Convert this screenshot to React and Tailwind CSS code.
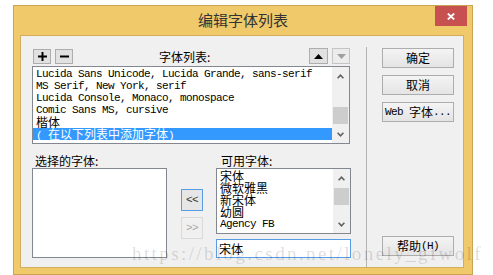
import React from 'react'

const mono = "font-['Liberation_Mono','Noto_Sans_CJK_SC',monospace] text-[11px] tracking-[-0.6px]"
const cjk = "font-['Noto_Sans_CJK_SC',sans-serif] text-[12px] tracking-normal"

function Chevron({ down }) {
  return (
    <svg width="7" height="5" viewBox="0 0 7 5">
      <path d={down ? 'M0.6 0.8 L3.5 3.8 L6.4 0.8' : 'M0.6 4.2 L3.5 1.2 L6.4 4.2'}
        fill="none" stroke="#606060" strokeWidth="1.6" />
    </svg>
  )
}

function ScrollBar({ thumb }) {
  return (
    <div className="w-[17px] bg-[#f0f0f0] flex flex-col">
      <div className="h-[17px] flex items-center justify-center pt-[2px]"><Chevron /></div>
      <div className="flex-1">
        <div className={'mx-px h-[17px] bg-[#cdcdcd] ' + thumb} />
      </div>
      <div className="h-[17px] flex items-center justify-center"><Chevron down /></div>
    </div>
  )
}

function Btn({ children, className = '' }) {
  return (
    <div className={'h-[20px] border border-[#adadad] bg-linear-to-b from-[#f4f4f4] to-[#e4e4e4] flex items-center justify-center text-black ' + className}>
      {children}
    </div>
  )
}

const fontSets = [
  'Lucida Sans Unicode, Lucida Grande, sans-serif',
  'MS Serif, New York, serif',
  'Lucida Console, Monaco, monospace',
  'Comic Sans MS, cursive',
]

const available = ['宋体', '微软雅黑', '新宋体', '幼圆']

export default function App() {
  return (
    <div className="w-[493px] h-[275px] bg-white relative overflow-hidden">
      <div className="ml-[13px] mt-[5px] w-[460px] h-[270px] border border-[#c9a452] bg-[#f0c96b] flex flex-col">
        {/* title bar */}
        <div className="h-[29px] relative flex items-center justify-center">
          <span className="font-['Noto_Sans_CJK_SC',sans-serif] text-[15px] text-[#333]">编辑字体列表</span>
          <div className="absolute right-[5px] top-0 w-[32px] h-[20px] bg-[#c75050] flex items-center justify-center">
            <svg width="8" height="7" viewBox="0 0 8 7">
              <path d="M0.8 0.5 L7.2 6.5 M7.2 0.5 L0.8 6.5" stroke="#fff" strokeWidth="1.8" />
            </svg>
          </div>
        </div>

        {/* client area */}
        <div className="ml-[6px] mr-[8px] h-[233px] border border-[#d4ae5e] bg-[#f0f0f0] flex">
          <div className="w-[330px] pl-[11px] pt-[12px]">
            <div className="w-[318px] h-[16px] flex items-end">
              <div className="ml-px w-[18px] h-[15px] border border-[#adadad] bg-[#e1e1e1] flex items-center justify-center">
                <svg width="9" height="9" viewBox="0 0 9 9"><path d="M0 4.5 H9 M4.5 0 V9" stroke="#000" strokeWidth="2" /></svg>
              </div>
              <div className="ml-[4px] w-[18px] h-[15px] border border-[#adadad] bg-[#e1e1e1] flex items-center justify-center">
                <svg width="9" height="9" viewBox="0 0 9 9"><path d="M0 4.5 H9" stroke="#000" strokeWidth="2" /></svg>
              </div>
              <span className={cjk + ' ml-[86px] leading-[14px] text-black'}>字体列表:</span>
              <div className="ml-auto w-[19px] h-[16px] border border-[#adadad] bg-[#e1e1e1] flex items-center justify-center">
                <svg width="9" height="5" viewBox="0 0 9 5"><path d="M0 5 L4.5 0 L9 5 Z" fill="#000" /></svg>
              </div>
              <div className="ml-[4px] w-[18px] h-[16px] border border-[#c4c4c4] bg-[#ececec] flex items-center justify-center">
                <svg width="9" height="5" viewBox="0 0 9 5"><path d="M0 0 L4.5 5 L9 0 Z" fill="#a0a0a0" /></svg>
              </div>
            </div>

            <div className="mt-[2px] w-[318px] h-[78px] border border-[#828790] bg-white flex">
              <div className="flex-1 pt-px text-black">
                {fontSets.map(f => (
                  <div key={f} className={mono + ' h-[12px] leading-[12px] pl-[3px] whitespace-pre'}>{f}</div>
                ))}
                <div className={cjk + ' h-[12px] leading-[12px] pl-[3px]'}>楷体</div>
                <div className={mono + ' h-[12px] leading-[12px] pl-[3px] whitespace-pre bg-[#3399ff] text-white'}>
                  {'( '}<span className={cjk + ' leading-[12px]'}>在以下列表中添加字体</span>{')'}
                </div>
              </div>
              <ScrollBar thumb="mt-[23px]" />
            </div>

            <div className="mt-[10px] flex">
              <div className="w-[135px]">
                <div className={cjk + ' h-[14px] leading-[14px] pl-[3px] text-black'}>选择的字体:</div>
                <div className="h-[90px] border border-[#828790] bg-white" />
              </div>
              <div className="ml-[14px] w-[22px] pt-[35px]">
                <div className={mono + ' h-[22px] border border-[#569de5] bg-[#e6e6e6] flex items-center justify-center text-[#333]'}>{'<<'}</div>
                <div className={mono + ' mt-[6px] h-[22px] border border-[#d9d9d9] bg-[#f0f0f0] flex items-center justify-center text-[#a8a8a8]'}>{'>>'}</div>
              </div>
              <div className="ml-[13px] w-[135px]">
                <div className={cjk + ' h-[14px] leading-[14px] pl-[5px] text-black'}>可用字体:</div>
                <div className="h-[66px] border border-[#828790] bg-white flex">
                  <div className="flex-1 pt-px text-black">
                    {available.map(f => (
                      <div key={f} className={cjk + ' h-[12px] leading-[12px] pl-[3px]'}>{f}</div>
                    ))}
                    <div className={mono + ' h-[12px] leading-[12px] pl-[3px] whitespace-pre'}>Agency FB</div>
                  </div>
                  <ScrollBar thumb="mt-[2px]" />
                </div>
                <div className={cjk + ' mt-[5px] h-[19px] border border-[#569de5] bg-white leading-[17px] pl-[2px] text-black'}>宋体</div>
              </div>
            </div>
          </div>

          <div className="ml-[15px] mt-[11px] w-px bg-[#b4b4b4]" />

          <div className="ml-[15px] w-[72px] pt-[12px] pb-[11px] flex flex-col">
            <Btn><span className={cjk}>确定</span></Btn>
            <Btn className="mt-[7px]"><span className={cjk}>取消</span></Btn>
            <Btn className="mt-[7px]">
              <span className={mono + ' whitespace-pre'}>{'Web '}</span>
              <span className={cjk}>字体</span>
              <span className={mono}>...</span>
            </Btn>
            <div className="flex-1" />
            <Btn>
              <span className={cjk}>帮助</span>
              <span className={mono}>(H)</span>
            </Btn>
          </div>
        </div>
      </div>

      <div className="absolute left-[132px] top-[244px] font-['Liberation_Serif',serif] text-[19px] tracking-[2.4px] leading-none text-black/15 whitespace-nowrap pointer-events-none">
        https://blog.csdn.net/lonely_gfwolf
      </div>
    </div>
  )
}
